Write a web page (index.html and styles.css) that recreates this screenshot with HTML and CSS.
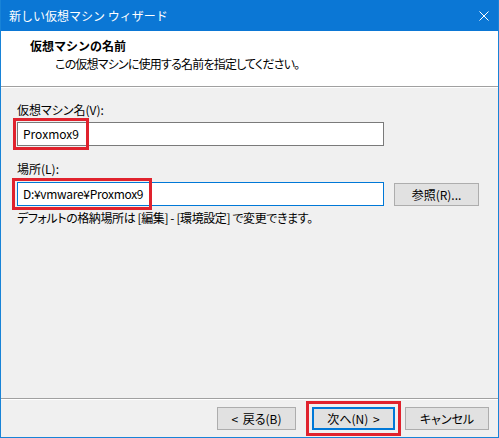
FILE: index.html
```html
<!DOCTYPE html>
<html lang="ja">
<head>
<meta charset="utf-8">
<title>新しい仮想マシン ウィザード</title>
<link rel="stylesheet" href="styles.css">
</head>
<body>
<div class="window">
  <div class="titlebar">
    <span class="title">新しい仮想マシン ウィザード</span>
    <span class="close">
      <svg width="10" height="10" viewBox="0 0 10 10"><path d="M0.5 0.5 L9.5 9.5 M9.5 0.5 L0.5 9.5" stroke="#fff" stroke-width="1" fill="none"/></svg>
    </span>
  </div>
  <div class="header">
    <div class="header-title">仮想マシンの名前</div>
    <div class="header-sub">この仮想マシンに使用する名前を指定してください。</div>
  </div>
  <div class="main">
    <div class="label">仮想マシン名(V):</div>
    <div class="field">
      <div class="input">Proxmox9</div>
      <span class="mark mark-name"></span>
    </div>
    <div class="label label-loc">場所(L):</div>
    <div class="row">
      <div class="field">
        <div class="input focused">D:¥vmware¥Proxmox9</div>
        <span class="mark mark-loc"></span>
      </div>
      <div class="btn browse">参照(R)...</div>
    </div>
    <div class="hint">デフォルトの格納場所は [編集] - [環境設定] で変更できます。</div>
  </div>
  <div class="footer">
    <div class="btn back">&lt; 戻る(B)</div>
    <div class="btn default">次へ(N) &gt;</div>
    <div class="btn cancel">キャンセル</div>
  </div>
</div>
</body>
</html>
```
FILE: styles.css
```css
html, body {
  margin: 0;
  padding: 0;
  background: #f0f0f0;
}
body {
  font-family: "Noto Sans CJK JP", "Noto Sans", sans-serif;
  font-size: 12px;
  color: #000;
}
.window {
  width: 499px;
  height: 438px;
  box-sizing: border-box;
  border: 1px solid #1883d7;
  border-top: none;
  display: flex;
  flex-direction: column;
  background: #f0f0f0;
  overflow: hidden;
}
.titlebar {
  height: 31px;
  flex: none;
  background: #0b77d5;
  color: #fff;
  display: flex;
  align-items: center;
  padding-left: 9px;
  margin: 0 -1px;
}
.title {
  flex: 1;
  font-size: 12px;
  line-height: 16px;
}
.close {
  width: 20px;
  display: flex;
  justify-content: flex-start;
  align-items: center;
}
.header {
  height: 55px;
  flex: none;
  background: #fff;
  border-bottom: 1px solid #a0a0a0;
  box-shadow: 0 1px 0 #fff;
  box-sizing: content-box;
  padding-left: 29px;
}
.header-title {
  font-weight: bold;
  line-height: 16px;
  margin-top: 7px;
}
.header-sub {
  line-height: 16px;
  margin-top: 2px;
  padding-left: 25px;
  font-feature-settings: "palt";
  letter-spacing: -0.8px;
}
.main {
  flex: 1;
  padding: 15px 19px 0 16px;
  font-feature-settings: "palt";
}
.label {
  line-height: 16px;
  margin-bottom: 4px;
}
.label-loc {
  margin-top: 15px;
  margin-bottom: 5px;
}
.field {
  position: relative;
}
.input {
  width: 367px;
  height: 24px;
  box-sizing: border-box;
  border: 1px solid #7a7a7a;
  background: #fff;
  padding-left: 5px;
  line-height: 22px;
  font-feature-settings: normal;
}
.input.focused {
  border-color: #0078d7;
  letter-spacing: -0.3px;
}
.mark {
  position: absolute;
  border: 3px solid #e0222d;
  box-sizing: border-box;
  pointer-events: none;
}
.mark-name {
  left: -4px;
  top: -4px;
  width: 76px;
  height: 32px;
}
.mark-loc {
  left: -5px;
  top: -4px;
  width: 140px;
  height: 32px;
}
.row {
  display: flex;
  align-items: flex-start;
  gap: 10px;
}
.btn {
  height: 23px;
  box-sizing: border-box;
  border: 1px solid #adadad;
  background: #e1e1e1;
  display: flex;
  align-items: center;
  justify-content: center;
  line-height: 16px;
  width: 80px;
  font-feature-settings: "palt";
}
.browse {
  width: 85px;
  margin-top: 1px;
}
.hint {
  line-height: 16px;
  margin-top: 4px;
  letter-spacing: -0.4px;
}
.footer {
  flex: none;
  height: 39px;
  box-sizing: border-box;
  border-top: 1px solid #a0a0a0;
  box-shadow: inset 0 1px 0 #fff;
  display: flex;
  justify-content: flex-end;
  align-items: flex-start;
  padding: 8px 9px 0 0;
}
.btn.back {
  width: 79px;
  margin-right: 16px;
  word-spacing: 2px;
}
.btn.default {
  border: 2px solid #0078d7;
  width: 83px;
  outline: 3px solid #e0222d;
  outline-offset: 3px;
  margin-right: 10px;
  word-spacing: 2px;
}
.btn.cancel {
  width: 84px;
}
```
